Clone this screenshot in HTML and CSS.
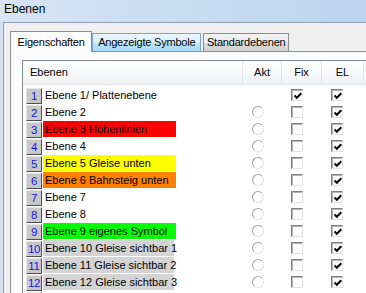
FILE: index.html
```html
<!DOCTYPE html>
<html lang="de">
<head>
  <meta charset="utf-8">
  <title>Ebenen</title>
  <link rel="stylesheet" href="styles.css">
</head>
<body>
  <div class="titlebar">Ebenen</div>
  <div class="client">
    <div class="tabs">
      <div class="tab active">Eigenschaften</div>
      <div class="tab hover">Angezeigte Symbole</div>
      <div class="tab">Standardebenen</div>
    </div>
    <div class="panel">
      <div class="list">
        <div class="list-head">
          <div class="h-name">Ebenen</div>
          <div class="h-col h-akt">Akt</div>
          <div class="h-col h-fix">Fix</div>
          <div class="h-col h-el">EL</div>
          <div class="h-col h-rest"></div>
        </div>
        <div class="rows">
          <div class="row">
            <div class="r-name"><span class="num">1</span><span class="label">Ebene 1/ Plattenebene</span></div>
            <div class="cell"></div>
            <div class="cell"><span class="chk"><svg viewBox="0 0 10 10"><path d="M1.5 4.5 L3.8 6.8 L8.3 2.3"/></svg></span></div>
            <div class="cell"><span class="chk"><svg viewBox="0 0 10 10"><path d="M1.5 4.5 L3.8 6.8 L8.3 2.3"/></svg></span></div>
          </div>
          <div class="row">
            <div class="r-name"><span class="num">2</span><span class="label">Ebene 2</span></div>
            <div class="cell"><span class="radio"></span></div>
            <div class="cell"><span class="chk"></span></div>
            <div class="cell"><span class="chk"><svg viewBox="0 0 10 10"><path d="M1.5 4.5 L3.8 6.8 L8.3 2.3"/></svg></span></div>
          </div>
          <div class="row">
            <div class="r-name"><span class="num">3</span><span class="label red">Ebene 3 Höhenlinien</span></div>
            <div class="cell"><span class="radio"></span></div>
            <div class="cell"><span class="chk"></span></div>
            <div class="cell"><span class="chk"><svg viewBox="0 0 10 10"><path d="M1.5 4.5 L3.8 6.8 L8.3 2.3"/></svg></span></div>
          </div>
          <div class="row">
            <div class="r-name"><span class="num">4</span><span class="label">Ebene 4</span></div>
            <div class="cell"><span class="radio"></span></div>
            <div class="cell"><span class="chk"></span></div>
            <div class="cell"><span class="chk"><svg viewBox="0 0 10 10"><path d="M1.5 4.5 L3.8 6.8 L8.3 2.3"/></svg></span></div>
          </div>
          <div class="row">
            <div class="r-name"><span class="num">5</span><span class="label yellow">Ebene 5 Gleise unten</span></div>
            <div class="cell"><span class="radio"></span></div>
            <div class="cell"><span class="chk"></span></div>
            <div class="cell"><span class="chk"><svg viewBox="0 0 10 10"><path d="M1.5 4.5 L3.8 6.8 L8.3 2.3"/></svg></span></div>
          </div>
          <div class="row">
            <div class="r-name"><span class="num">6</span><span class="label orange">Ebene 6 Bahnsteig unten</span></div>
            <div class="cell"><span class="radio"></span></div>
            <div class="cell"><span class="chk"></span></div>
            <div class="cell"><span class="chk"><svg viewBox="0 0 10 10"><path d="M1.5 4.5 L3.8 6.8 L8.3 2.3"/></svg></span></div>
          </div>
          <div class="row">
            <div class="r-name"><span class="num">7</span><span class="label">Ebene 7</span></div>
            <div class="cell"><span class="radio"></span></div>
            <div class="cell"><span class="chk"></span></div>
            <div class="cell"><span class="chk"><svg viewBox="0 0 10 10"><path d="M1.5 4.5 L3.8 6.8 L8.3 2.3"/></svg></span></div>
          </div>
          <div class="row">
            <div class="r-name"><span class="num">8</span><span class="label">Ebene 8</span></div>
            <div class="cell"><span class="radio"></span></div>
            <div class="cell"><span class="chk"></span></div>
            <div class="cell"><span class="chk"><svg viewBox="0 0 10 10"><path d="M1.5 4.5 L3.8 6.8 L8.3 2.3"/></svg></span></div>
          </div>
          <div class="row">
            <div class="r-name"><span class="num">9</span><span class="label green">Ebene 9 eigenes Symbol</span></div>
            <div class="cell"><span class="radio"></span></div>
            <div class="cell"><span class="chk"></span></div>
            <div class="cell"><span class="chk"><svg viewBox="0 0 10 10"><path d="M1.5 4.5 L3.8 6.8 L8.3 2.3"/></svg></span></div>
          </div>
          <div class="row">
            <div class="r-name"><span class="num">10</span><span class="label gray">Ebene 10 Gleise sichtbar 1</span></div>
            <div class="cell"><span class="radio"></span></div>
            <div class="cell"><span class="chk"></span></div>
            <div class="cell"><span class="chk"><svg viewBox="0 0 10 10"><path d="M1.5 4.5 L3.8 6.8 L8.3 2.3"/></svg></span></div>
          </div>
          <div class="row">
            <div class="r-name"><span class="num">11</span><span class="label gray">Ebene 11 Gleise sichtbar 2</span></div>
            <div class="cell"><span class="radio"></span></div>
            <div class="cell"><span class="chk"></span></div>
            <div class="cell"><span class="chk"><svg viewBox="0 0 10 10"><path d="M1.5 4.5 L3.8 6.8 L8.3 2.3"/></svg></span></div>
          </div>
          <div class="row">
            <div class="r-name"><span class="num">12</span><span class="label gray">Ebene 12 Gleise sichtbar 3</span></div>
            <div class="cell"><span class="radio"></span></div>
            <div class="cell"><span class="chk"></span></div>
            <div class="cell"><span class="chk"><svg viewBox="0 0 10 10"><path d="M1.5 4.5 L3.8 6.8 L8.3 2.3"/></svg></span></div>
          </div>
          <div class="row">
            <div class="r-name"><span class="num"></span><span class="label"></span></div>
          </div>
        </div>
      </div>
    </div>
  </div>
</body>
</html>
```

FILE: styles.css
```css
* {
  margin: 0;
  padding: 0;
  box-sizing: border-box;
}

body {
  width: 366px;
  height: 293px;
  overflow: hidden;
  font-family: "Liberation Sans", Arial, sans-serif;
  font-size: 11px;
  color: #000;
  background: linear-gradient(90deg, #d3e2f2 0%, #c2d7ee 100%);
}

.titlebar {
  height: 22px;
  padding-left: 4px;
  font-size: 12px;
  line-height: 18px;
  background: linear-gradient(90deg, #d6e5f4 0%, #c6dbf1 60%, #bcd4ef 100%);
}

/* window client area */
.client {
  margin-left: 3px;
  height: 271px;
  padding: 8px 0 0 6px;
  background: #f0f0f0;
  border-top: 1px solid #8d9db3;
  border-left: 1px solid #8d9db3;
}

.tabs {
  display: flex;
  align-items: flex-end;
  height: 21px;
  margin-bottom: -1px;
  position: relative;
  z-index: 1;
}

.tab {
  height: 18px;
  margin-bottom: 1px;
  padding: 0 2.5px;
  line-height: 16px;
  letter-spacing: -0.2px;
  white-space: nowrap;
  border: 1px solid #898c95;
  border-bottom: none;
  background: linear-gradient(180deg, #f2f2f2 0%, #ebebeb 50%, #dddddd 51%, #cfcfcf 100%);
}

.tab + .tab {
  margin-left: 2px;
}

.tab.active {
  height: 21px;
  margin-bottom: 0;
  padding: 0 6.5px;
  line-height: 20px;
  background: #fcfcfc;
}

.tab.active + .tab {
  margin-left: 0;
}

.tab.hover {
  padding: 0 5px;
  border-color: #7da2ce;
  background: linear-gradient(180deg, #eaf6fd 0%, #d9f0fc 50%, #bee6fd 51%, #a7d9f5 100%);
}

.panel {
  height: 100%;
  padding: 8px 0 0 11px;
  background: #fcfcfc;
  border-top: 1px solid #898c95;
  border-left: 1px solid #898c95;
}

.list {
  height: 100%;
  background: #fff;
  border-top: 1px solid #828790;
  border-left: 1px solid #828790;
}

.list-head {
  display: flex;
  height: 24px;
  line-height: 23px;
  background: linear-gradient(180deg, #ffffff 0%, #f7f8f9 60%, #f1f2f4 100%);
  border-bottom: 1px solid #e3e4e6;
}

.h-name {
  width: 219px;
  padding-left: 7px;
}

.h-col {
  text-align: center;
  border-left: 1px solid #e3e4e6;
}

.h-akt { width: 39px; }
.h-fix { width: 40px; }
.h-el { width: 42px; }
.h-rest { flex: 1; }

.rows {
  padding-top: 2px;
}

.row {
  display: flex;
  height: 17px;
}

.r-name {
  display: flex;
  width: 219px;
  padding-left: 3px;
}

.num {
  width: 16px;
  height: 16px;
  margin-top: 1px;
  text-align: center;
  line-height: 14px;
  color: #1414f0;
  font-size: 11.5px;
  letter-spacing: -0.3px;
  background: #c8c8c8;
  border-top: 1px solid #e6e6e6;
  border-left: 1px solid #e6e6e6;
  border-right: 1px solid #505050;
  border-bottom: 1px solid #505050;
}

.label {
  width: 133px;
  height: 16px;
  margin-left: 1px;
  padding-left: 2px;
  line-height: 16px;
  white-space: nowrap;
}

.red { background: #ff0000; }
.yellow { background: #ffff00; }
.orange { background: #ff8000; }
.green { background: #00ff00; }
.gray { background: #d4d4d4; width: 131px; }

.cell {
  width: 39px;
  padding: 2px 0 0 10px;
}

.cell + .cell {
  width: 40px;
}

.radio {
  display: block;
  width: 12px;
  height: 12px;
  border-radius: 50%;
  border: 1px solid;
  border-color: #a3a3a3 #e2e2e2 #e2e2e2 #a3a3a3;
  background: #fff;
}

.chk {
  display: block;
  width: 12px;
  height: 12px;
  padding: 1px 0 0 1px;
  background: #fff;
  border: 1px solid;
  border-color: #808080 #e3e3e3 #e3e3e3 #808080;
  box-shadow: inset 1px 1px 0 #b4b4b4;
}

.chk svg {
  display: block;
  width: 10px;
  height: 10px;
  fill: none;
  stroke: #000;
  stroke-width: 2;
}
```
